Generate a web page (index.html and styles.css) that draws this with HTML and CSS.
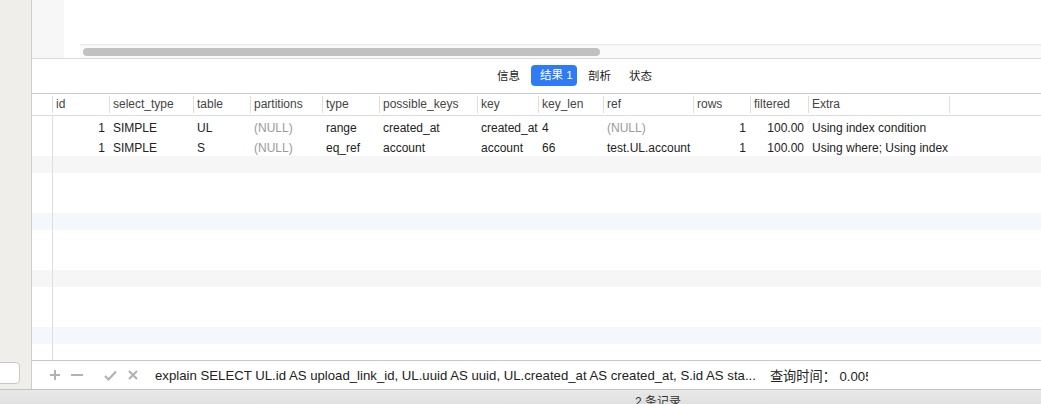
FILE: index.html
```html
<!DOCTYPE html>
<html>
<head>
<meta charset="utf-8">
<link rel="stylesheet" href="styles.css">
</head>
<body>
<div class="app">
  <div class="top">
    <aside class="sidebar">
      <div class="search"></div>
    </aside>
    <main class="main">
      <div class="editor">
        <div class="gutter"></div>
        <div class="editor-body">
          <div class="hscroll"><div class="thumb"></div></div>
        </div>
      </div>
      <div class="tabs">
        <span class="tab">信息</span>
        <span class="tab active">结果 1</span>
        <span class="tab">剖析</span>
        <span class="tab">状态</span>
      </div>
      <div class="grid head">
        <div class="c rh"></div>
        <div class="c">id</div>
        <div class="c">select_type</div>
        <div class="c">table</div>
        <div class="c">partitions</div>
        <div class="c">type</div>
        <div class="c">possible_keys</div>
        <div class="c">key</div>
        <div class="c">key_len</div>
        <div class="c">ref</div>
        <div class="c">rows</div>
        <div class="c">filtered</div>
        <div class="c">Extra</div>
        <div class="c"></div>
      </div>
      <div class="body">
        <div class="grid row">
          <div class="c rh"></div>
          <div class="c num first">1</div>
          <div class="c">SIMPLE</div>
          <div class="c">UL</div>
          <div class="c null">(NULL)</div>
          <div class="c">range</div>
          <div class="c">created_at</div>
          <div class="c">created_at</div>
          <div class="c">4</div>
          <div class="c null">(NULL)</div>
          <div class="c num">1</div>
          <div class="c num">100.00</div>
          <div class="c">Using index condition</div>
          <div class="c"></div>
        </div>
        <div class="grid row">
          <div class="c rh"></div>
          <div class="c num first">1</div>
          <div class="c">SIMPLE</div>
          <div class="c">S</div>
          <div class="c null">(NULL)</div>
          <div class="c">eq_ref</div>
          <div class="c">account</div>
          <div class="c">account</div>
          <div class="c">66</div>
          <div class="c">test.UL.account</div>
          <div class="c num">1</div>
          <div class="c num">100.00</div>
          <div class="c">Using where; Using index</div>
          <div class="c"></div>
        </div>
        <div class="fill stripe gray"><div class="rh"></div></div>
        <div class="fill gap"><div class="rh"></div></div>
        <div class="fill stripe blue"><div class="rh"></div></div>
        <div class="fill gap"><div class="rh"></div></div>
        <div class="fill stripe gray"><div class="rh"></div></div>
        <div class="fill gap"><div class="rh"></div></div>
        <div class="fill stripe blue"><div class="rh"></div></div>
        <div class="fill rest"><div class="rh"></div></div>
      </div>
      <div class="bottombar">
        <svg class="ico" width="12" height="12" viewBox="0 0 12 12"><path d="M6 1v10M1 6h10" stroke="#b3b3b3" stroke-width="2"/></svg>
        <svg class="ico minus" width="12" height="12" viewBox="0 0 12 12"><path d="M0 6h12" stroke="#b3b3b3" stroke-width="2"/></svg>
        <svg class="ico check" width="13" height="11" viewBox="0 0 13 11"><path d="M1 6l3.5 3.5L12 1.5" stroke="#b3b3b3" stroke-width="2.2" fill="none"/></svg>
        <svg class="ico cross" width="10" height="10" viewBox="0 0 10 10"><path d="M1 1l8 8M9 1l-8 8" stroke="#b3b3b3" stroke-width="2.2"/></svg>
        <span class="query">explain SELECT UL.id AS upload_link_id, UL.uuid AS uuid, UL.created_at AS created_at, S.id AS sta...</span>
        <span class="qtime">查询时间： 0.005</span>
      </div>
    </main>
  </div>
  <div class="status">2 条记录</div>
</div>
</body>
</html>
```
FILE: styles.css
```css
html, body {
  margin: 0;
  padding: 0;
}
body {
  width: 1041px;
  height: 404px;
  overflow: hidden;
  font-family: "Liberation Sans", Arial, "Noto Sans CJK SC", sans-serif;
  font-size: 12px;
  color: #222;
  background: #fff;
}
.app {
  display: flex;
  flex-direction: column;
  height: 404px;
}
.top {
  display: flex;
  height: 389px;
  flex: none;
}
.sidebar {
  width: 31px;
  flex: none;
  background: #f0eeeb;
  border-right: 1px solid #cdcdcd;
  display: flex;
  flex-direction: column;
  overflow: hidden;
}
.search {
  margin-top: auto;
  margin-left: -12px;
  margin-bottom: 5px;
  width: 30px;
  height: 20px;
  background: #fff;
  border: 1px solid #c9c9c9;
  border-radius: 4px;
}
.main {
  flex: 1;
  display: flex;
  flex-direction: column;
  min-width: 0;
}
.editor {
  height: 58px;
  display: flex;
  border-bottom: 1px solid #dadada;
  flex: none;
}
.gutter {
  width: 32px;
  background: #f7f7f7;
}
.editor-body {
  flex: 1;
  display: flex;
  flex-direction: column;
  justify-content: flex-end;
}
.hscroll {
  margin-left: 16px;
  height: 13px;
  border-top: 1px solid #e6e6e6;
  background: #fafafa;
  display: flex;
  align-items: center;
}
.thumb {
  margin-left: 3px;
  width: 517px;
  height: 8px;
  border-radius: 4px;
  background: #c1c1c1;
}
.tabs {
  height: 34px;
  box-sizing: border-box;
  padding-bottom: 2px;
  flex: none;
  display: flex;
  align-items: center;
  padding-left: 457px;
  font-family: "Noto Sans CJK SC", "Liberation Sans", sans-serif;
  font-size: 11.5px;
  color: #222;
}
.tab {
  height: 21px;
  line-height: 21px;
  padding: 0 8px;
  border-radius: 4px;
  white-space: nowrap;
}
.tab:first-child { margin-right: 3px; }
.tab.active {
  box-sizing: border-box;
  width: 46px;
  background: #2f7bf5;
  color: #fff;
  padding: 0 0 0 9px;
  margin-right: 3px;
  font-family: "Liberation Sans", "Noto Sans CJK SC", sans-serif;
}
.tab:nth-child(3) { margin-right: 2px; }
.grid {
  display: grid;
  grid-template-columns: 20px 57px 84px 57px 72px 57px 98px 61px 65px 90px 57px 58px 141px 1fr;
}
.c {
  box-sizing: border-box;
  white-space: nowrap;
  overflow: hidden;
}
.head {
  height: 21px;
  border-top: 1px solid #c8c8c8;
  border-bottom: 1px solid #dcdcdc;
  color: #444;
  flex: none;
}
.head .c {
  line-height: 21px;
  padding-left: 3px;
}
.head .c:not(.rh) {
  border-left: 1px solid #dedede;
  border-image: linear-gradient(to bottom, transparent 3px, #dedede 3px, #dedede 18px, transparent 18px) 1;
}
.body {
  flex: 1;
  display: flex;
  flex-direction: column;
}
.row {
  height: 20px;
  box-sizing: border-box;
  padding-top: 4px;
  line-height: 16px;
  flex: none;
}
.row .c {
  padding-left: 4px;
}
.row .c.first {
  border-left: 1px solid #dedede;
  margin-top: -4px;
  padding-top: 4px;
}
.row .c.num {
  text-align: right;
  padding-right: 4px;
  padding-left: 0;
}
.null {
  color: #9a9a9a;
}
.fill {
  display: flex;
  flex: none;
}
.fill .rh {
  width: 20px;
  border-right: 1px solid #dedede;
}
.stripe { height: 17px; }
.stripe.gray { background: #f6f6f6; }
.stripe.blue { background: #f4f7fc; }
.gap { height: 40px; }
.rest { flex: 1; }
.bottombar {
  height: 28px;
  flex: none;
  border-top: 1px solid #c9c9c9;
  display: flex;
  align-items: center;
  padding-left: 17px;
  font-size: 13.2px;
  color: #222;
  white-space: nowrap;
  overflow: hidden;
}
.ico { flex: none; }
.minus { margin-left: 10px; }
.check { margin-left: 21px; }
.cross { margin-left: 11px; }
.query {
  margin-left: 17px;
  flex: none;
}
.qtime {
  margin-left: 14px;
  width: 98px;
  overflow: hidden;
  flex: none;
  font-family: "Liberation Sans", "Noto Sans CJK SC", sans-serif;
}
.status {
  flex: none;
  height: 22px;
  box-sizing: border-box;
  background: linear-gradient(#e9e9e9, #dcdcdc);
  border-top: 1px solid #c4c4c4;
  padding-left: 635px;
  line-height: 16px;
  padding-top: 4px;
  font-family: "Liberation Sans", "Noto Sans CJK SC", sans-serif;
  font-size: 12px;
  color: #333;
}
```
